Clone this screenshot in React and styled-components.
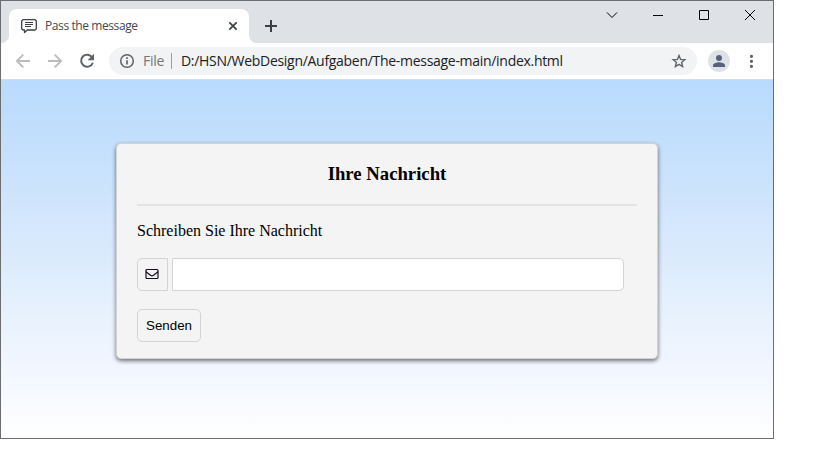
import React from "react";
import styled, { createGlobalStyle } from "styled-components";

const GlobalStyle = createGlobalStyle`
  *, *::before, *::after { box-sizing: border-box; }
  html, body { margin: 0; background: #fff; }
  body { overflow: hidden; }
`;

const Window = styled.div`
  width: 774px;
  height: 439px;
  border: 1px solid #6c6d70;
  display: flex;
  flex-direction: column;
  font-family: "Open Sans", "Noto Sans", sans-serif;
`;

const TabStrip = styled.div`
  height: 42px;
  flex: none;
  background: #dee1e6;
  display: flex;
  padding: 8px 0 0 8px;
`;

const Tab = styled.div`
  position: relative;
  width: 240px;
  height: 34px;
  background: #fff;
  border-radius: 8px 8px 0 0;
  display: flex;
  align-items: center;
  padding: 0 11px 0 12px;

  &::before, &::after {
    content: "";
    position: absolute;
    bottom: 0;
    width: 8px;
    height: 8px;
  }
  &::before {
    left: -8px;
    background: radial-gradient(circle at 0 0, transparent 7.5px, #fff 8.5px);
  }
  &::after {
    right: -8px;
    background: radial-gradient(circle at 100% 0, transparent 7.5px, #fff 8.5px);
  }
`;

const TabTitle = styled.span`
  flex: 1;
  margin-left: 8px;
  font-size: 12px;
  line-height: 16px;
  letter-spacing: -0.41px;
  color: #45494d;
  white-space: nowrap;
`;

const NewTab = styled.div`
  margin: 11px 0 0 16px;
  height: 12px;
  display: flex;
`;

const WindowControls = styled.div`
  margin: -8px 0 0 auto;
  height: 28px;
  display: flex;
`;

const Control = styled.div`
  width: 46px;
  display: flex;
  justify-content: center;
  align-items: center;
`;

const Toolbar = styled.div`
  height: 37px;
  flex: none;
  background: #fff;
  border-bottom: 1px solid #dadce0;
  display: flex;
  align-items: center;
  padding: 0 14px 0 14px;
`;

const NavButtons = styled.div`
  display: flex;
  gap: 16px;
  width: 94px;
`;

const AddressBar = styled.div`
  width: 588px;
  height: 28px;
  border-radius: 14px;
  background: #f1f3f4;
  display: flex;
  align-items: center;
  padding: 0 10px 0 10px;
  font-size: 14px;
  line-height: 20px;
  white-space: nowrap;
`;

const Scheme = styled.span`
  margin-left: 8px;
  width: 28px;
  letter-spacing: -0.3px;
  color: #72767b;
`;

const Divider = styled.span`
  width: 1px;
  height: 16px;
  background: #9b9fa4;
`;

const Url = styled.span`
  flex: 1;
  margin-left: 9px;
  letter-spacing: -0.295px;
  color: #202124;
`;

const Avatar = styled.div`
  width: 22px;
  height: 22px;
  margin-left: 11px;
  border-radius: 50%;
  background: #dee1e6;
  display: flex;
  align-items: center;
  justify-content: center;
`;

const MenuDots = styled.div`
  margin-left: 20px;
  display: flex;
`;

const Page = styled.main`
  flex: 1;
  background: linear-gradient(#b9dbfe 0%, #c5e0fc 20%, #d0e5fd 34%, #d9eafc 48%, #e8f2fd 66%, #f1f6ff 80%, #fff 100%);
  font-family: "Liberation Serif", "Times New Roman", serif;
  color: #000;
  padding-top: 63px;
`;

const Card = styled.form`
  width: 542px;
  height: 216px;
  margin-left: 115px;
  border: 1px solid #d3d3d3;
  border-radius: 5px;
  background: #f4f4f4;
  box-shadow: 0 2px 4px rgba(0, 0, 0, 0.55);
  padding: 19px 20px 20px;
`;

const Heading = styled.h3`
  margin: 0;
  font-size: 18.72px;
  line-height: 21px;
  text-align: center;
`;

const Rule = styled.hr`
  margin: 20px 0 0;
  border: 0;
  height: 2px;
  background: #e3e3e3;
`;

const Prompt = styled.label`
  display: block;
  margin-top: 16px;
  font-size: 16px;
  line-height: 18px;
`;

const Field = styled.div`
  margin-top: 18px;
  display: flex;
  gap: 4px;
`;

const FieldIcon = styled.span`
  width: 31px;
  height: 33px;
  border: 1px solid #d3d3d3;
  border-radius: 5px 0 0 5px;
  display: flex;
  align-items: flex-start;
  padding: 9px 0 0 7px;
`;

const MessageInput = styled.input`
  width: 452px;
  height: 33px;
  border: 1px solid #d3d3d3;
  border-radius: 0 5px 5px 0;
  background: #fff;
  padding: 0 8px;
  outline: none;
`;

const SendButton = styled.button`
  display: block;
  margin-top: 18px;
  width: 64px;
  height: 33px;
  padding: 0;
  border: 1px solid #d3d3d3;
  border-radius: 5px;
  background: #f4f4f4;
  color: #000;
  font: 13.333px "Liberation Sans", Arial, sans-serif;
`;

const MessageIcon = () => (
  <svg width="16" height="16" viewBox="0 0 16 16" fill="none" stroke="#3c4043">
    <path strokeWidth="1.3" strokeLinejoin="round" d="M2.5 1.7h11a1.8 1.8 0 0 1 1.8 1.8v6.7a1.8 1.8 0 0 1-1.8 1.8H6.2l-2.7 2.6V12h-1A1.8 1.8 0 0 1 .7 10.200V3.500A1.8 1.8 0 0 1 2.500 1.700z" />
    <path strokeWidth="1.1" d="M4 4.500h8M4 6.500h8M4 8.500h6" />
  </svg>
);

const TabCloseIcon = () => (
  <svg width="10" height="10" viewBox="0 0 10 10" stroke="#3c4043" strokeWidth="1.7">
    <path d="M1.300 1.300l7.400 7.400M8.700 1.300l-7.400 7.400" />
  </svg>
);

const PlusIcon = () => (
  <svg width="12" height="12" viewBox="0 0 12 12" stroke="#3c4043" strokeWidth="2">
    <path d="M6 0v12M0 6h12" />
  </svg>
);

const ArrowIcon = ({ forward }) => (
  <svg width="16" height="16" viewBox="0 0 16 16" fill="none" stroke="#babcbe" strokeWidth="1.900">
    <path d={forward ? "M1 8h13M7.700 1.600L14.100 8l-6.400 6.400" : "M15 8H2M8.300 1.600L1.900 8l6.400 6.400"} />
  </svg>
);

const ReloadIcon = () => (
  <svg width="16" height="16" viewBox="0 0 16 16" fill="none">
    <path stroke="#5f6368" strokeWidth="2" d="M13.200 4.600A6 6 0 1 0 13.800 9.700" />
    <path fill="#5f6368" d="M15 .8v6.400H8.600z" />
  </svg>
);

const InfoIcon = () => (
  <svg width="16" height="16" viewBox="0 0 16 16" fill="none" stroke="#5f6368">
    <circle cx="8" cy="8" r="6.300" strokeWidth="1.500" />
    <path strokeWidth="1.700" d="M8 7.200v4.300M8 4.300v1.700" />
  </svg>
);

const StarIcon = () => (
  <svg width="16" height="16" viewBox="0 0 16 16" fill="none" stroke="#5f6368" strokeWidth="1.400">
    <path d="M8 2.500l1.600 3.900 4.200.3-3.200 2.700 1 4.100L8 11.300l-3.600 2.200 1-4.100-3.200-2.700 4.200-.3z" />
  </svg>
);

const PersonIcon = () => (
  <svg width="12" height="12" viewBox="0 0 12 12" fill="#56617a">
    <circle cx="6" cy="3" r="3" />
    <path d="M0 12v-1.700C0 8.200 4 7.200 6 7.200s6 1 6 3.100V12z" />
  </svg>
);

const DotsIcon = () => (
  <svg width="4" height="14" viewBox="0 0 4 14" fill="#5f6368">
    <circle cx="1.500" cy="2.300" r="1.600" />
    <circle cx="1.500" cy="7.300" r="1.600" />
    <circle cx="1.500" cy="12.300" r="1.600" />
  </svg>
);

const ControlIcon = ({ d }) => (
  <svg width="12" height="12" viewBox="0 0 12 12" fill="none" stroke="#000">
    <path d={d} />
  </svg>
);

const controls = [
  "M1 3.500l5 5 5-5",
  "M1 6.500h10",
  "M1.500 1.500h9v9h-9z",
  "M1 1l10 10M11 1L1 11",
];

const EnvelopeIcon = () => (
  <svg width="14" height="12" viewBox="0 0 14 12" fill="none" stroke="#160a20" strokeWidth="1.200">
    <rect x="1" y="1.500" width="12" height="9" rx="1" />
    <path d="M1 3.800l4.500 3.500q1.500 1 3 0L13 3.800" />
  </svg>
);

export default function App() {
  return (
    <>
      <GlobalStyle />
      <Window>
        <TabStrip>
          <Tab>
            <MessageIcon />
            <TabTitle>Pass the message</TabTitle>
            <TabCloseIcon />
          </Tab>
          <NewTab><PlusIcon /></NewTab>
          <WindowControls>
            {controls.map((d) => (
              <Control key={d}><ControlIcon d={d} /></Control>
            ))}
          </WindowControls>
        </TabStrip>
        <Toolbar>
          <NavButtons>
            <ArrowIcon />
            <ArrowIcon forward />
            <ReloadIcon />
          </NavButtons>
          <AddressBar>
            <InfoIcon />
            <Scheme>File</Scheme>
            <Divider />
            <Url>D:/HSN/WebDesign/Aufgaben/The-message-main/index.html</Url>
            <StarIcon />
          </AddressBar>
          <Avatar><PersonIcon /></Avatar>
          <MenuDots><DotsIcon /></MenuDots>
        </Toolbar>
        <Page>
          <Card>
            <Heading>Ihre Nachricht</Heading>
            <Rule />
            <Prompt htmlFor="message">Schreiben Sie Ihre Nachricht</Prompt>
            <Field>
              <FieldIcon><EnvelopeIcon /></FieldIcon>
              <MessageInput id="message" type="text" />
            </Field>
            <SendButton type="button">Senden</SendButton>
          </Card>
        </Page>
      </Window>
    </>
  );
}
